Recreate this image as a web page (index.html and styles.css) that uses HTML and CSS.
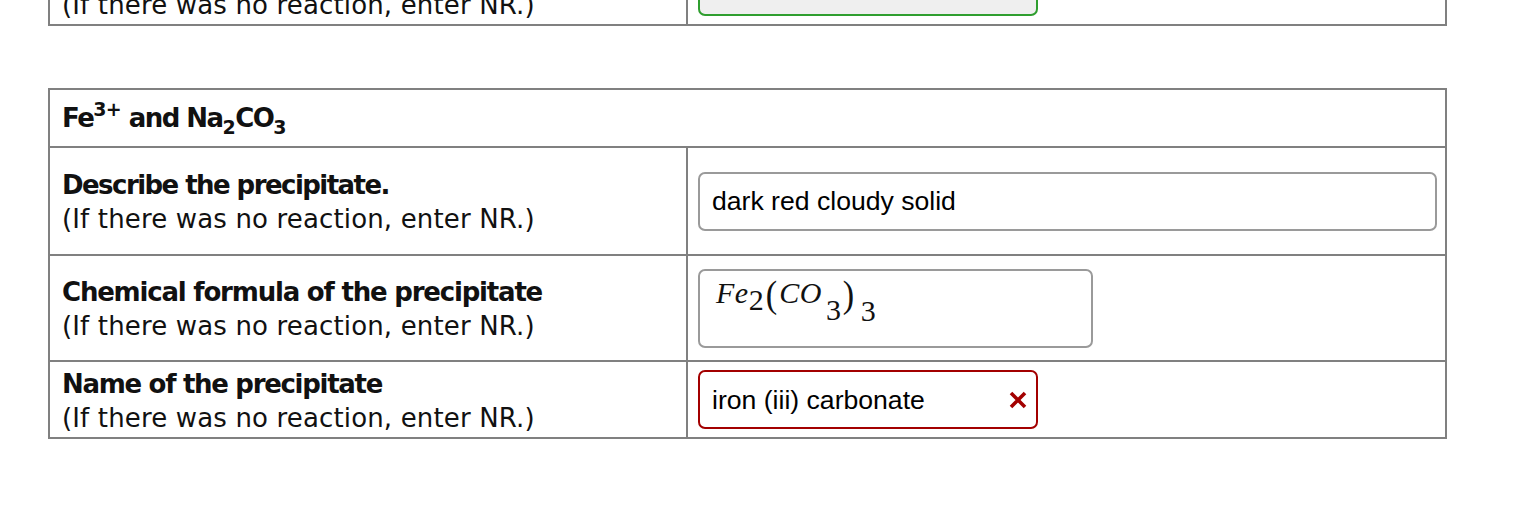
FILE: index.html
```html
<!DOCTYPE html>
<html>
<head>
<meta charset="utf-8">
<title>Precipitate</title>
<link rel="stylesheet" href="styles.css">
</head>
<body>
<div class="page">
  <div class="qtable prev">
    <div class="row r3 first">
      <div class="label">
        <div class="lbl-bold">Name of the precipitate</div>
        <div class="lbl-reg">(If there was no reaction, enter NR.)</div>
      </div>
      <div class="value">
        <div class="field f3 correct"></div>
      </div>
    </div>
  </div>

  <div class="qtable main">
    <div class="head"><span class="htext">Fe<sup class="sp">3+</sup> and Na<sub class="sb">2</sub>CO<sub class="sb">3</sub></span></div>
    <div class="row r1">
      <div class="label">
        <div class="lbl-bold b1">Describe the precipitate.</div>
        <div class="lbl-reg">(If there was no reaction, enter NR.)</div>
      </div>
      <div class="value">
        <div class="field f1">dark red cloudy solid</div>
      </div>
    </div>
    <div class="row r2">
      <div class="label">
        <div class="lbl-bold b2">Chemical formula of the precipitate</div>
        <div class="lbl-reg">(If there was no reaction, enter NR.)</div>
      </div>
      <div class="value">
        <div class="field f2">
          <span class="math"><span class="mi">Fe</span><span class="mn s2">2</span><span class="paren p1">(</span><span class="mi">CO</span><span class="mn s3">3</span><span class="paren p2">)</span><span class="mn s4">3</span></span>
        </div>
      </div>
    </div>
    <div class="row r3">
      <div class="label">
        <div class="lbl-bold">Name of the precipitate</div>
        <div class="lbl-reg">(If there was no reaction, enter NR.)</div>
      </div>
      <div class="value">
        <div class="field f3 wrong">
          <span class="ftext">iron (iii) carbonate</span>
          <svg class="xmark" width="18" height="18" viewBox="0 0 18 18"><path d="M2 2 L16 16 M16 2 L2 16" stroke="#a30000" stroke-width="3.6" fill="none"/></svg>
        </div>
      </div>
    </div>
  </div>
</div>
</body>
</html>
```

FILE: styles.css
```css
html, body {
  margin: 0;
  padding: 0;
  background: #ffffff;
}
body {
  overflow: hidden;
  font-family: "DejaVu Sans", Verdana, sans-serif;
  color: #111111;
}
.page {
  padding-left: 48px;
}
.qtable {
  width: 1399px;
  box-sizing: border-box;
  border: 2px solid #808080;
  font-size: 26px;
  line-height: 34px;
}
.prev {
  margin-top: -53px;
}
.main {
  margin-top: 62px;
}
.head {
  height: 56px;
  display: flex;
  align-items: center;
  padding-left: 12px;
  font-weight: bold;
}
.htext {
  letter-spacing: -1.55px;
  white-space: nowrap;
}
.sp {
  font-size: 19px;
  line-height: 0;
  vertical-align: 11px;
  letter-spacing: -0.6px;
}
.sb {
  font-size: 19px;
  line-height: 0;
  vertical-align: -7px;
  letter-spacing: -0.4px;
}
.row {
  display: grid;
  grid-template-columns: 638px 1fr;
  border-top: 2px solid #808080;
}
.row.first {
  border-top: none;
}
.r1 { height: 106px; }
.r2 { height: 104px; }
.r3 { height: 75px; }
.label {
  box-sizing: border-box;
  border-right: 2px solid #808080;
  padding-left: 12px;
  padding-top: 2px;
  display: flex;
  flex-direction: column;
  justify-content: center;
  white-space: nowrap;
}
.lbl-bold {
  font-weight: bold;
  letter-spacing: -1.3px;
}
.lbl-bold.b1 { letter-spacing: -1.55px; }
.lbl-bold.b2 { letter-spacing: -1.2px; }
.lbl-reg {
  letter-spacing: 0.15px;
}
.value {
  display: flex;
  align-items: center;
  padding-left: 10px;
}
.field {
  box-sizing: border-box;
  border: 2px solid #9a9a9a;
  border-radius: 7px;
  display: flex;
  align-items: center;
  padding: 0 12px;
  font-family: "Liberation Sans", Arial, sans-serif;
  font-size: 26.6px;
  color: #000000;
  background: #ffffff;
}
.f1 { width: 739px; height: 59px; }
.f2 { width: 395px; height: 79px; padding-left: 16px; padding-bottom: 12px; }
.f3 { width: 340px; height: 59px; justify-content: space-between; padding-right: 9px; }
.correct {
  border-color: #2f9e2f;
  background: #efefef;
}
.wrong {
  border-color: #a30000;
}
.xmark {
  display: block;
}
.math {
  font-family: "Liberation Serif", "Times New Roman", serif;
  line-height: 40px;
  white-space: nowrap;
  color: #111111;
}
.mi {
  font-style: italic;
  font-size: 30px;
  letter-spacing: 0.5px;
}
.mn {
  font-size: 30px;
}
.s2 { vertical-align: -7px; margin-left: 0; }
.s3 { vertical-align: -17px; margin-left: 4px; }
.s4 { vertical-align: -18px; margin-left: 6px; }
.paren {
  font-size: 38px;
  display: inline-block;
  transform: scaleX(0.9);
  vertical-align: -4px;
}
.p1 { margin-left: 1px; margin-right: 2px; }
.p2 { margin-left: 1px; }
```
